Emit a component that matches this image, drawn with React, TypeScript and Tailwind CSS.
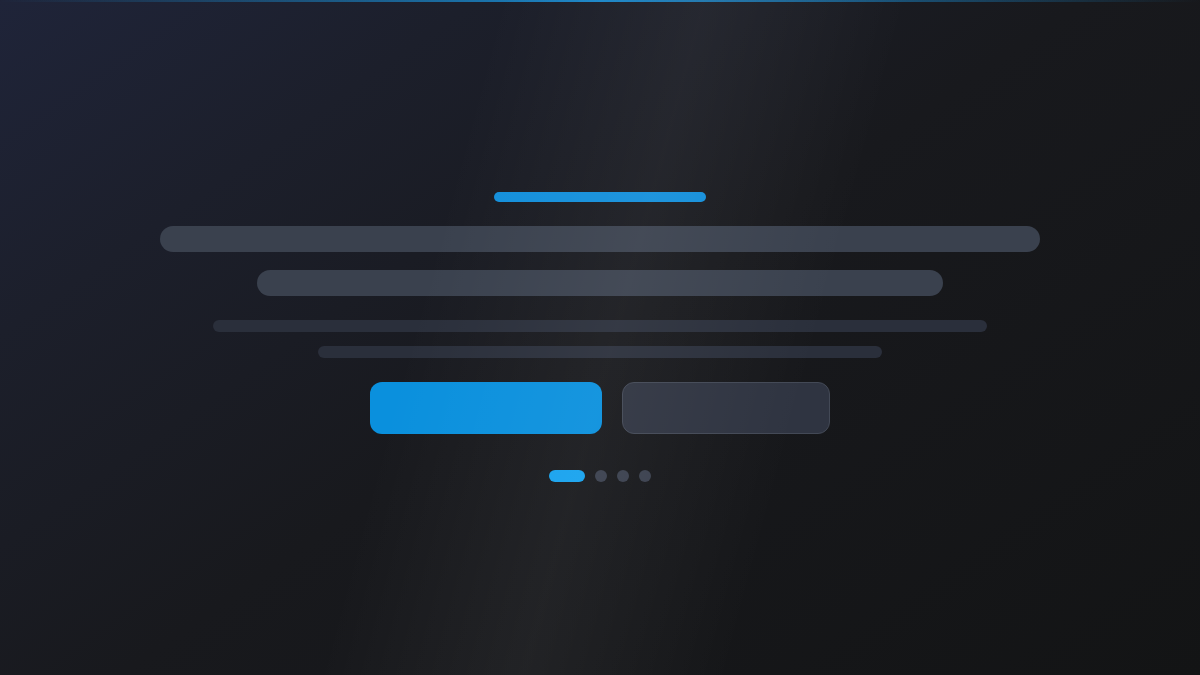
export default function App() {
  return (
    <div className="relative h-[675px] w-full overflow-hidden bg-[linear-gradient(145deg,#1f2439_0%,#1c1f2b_22%,#18191d_50%,#131415_100%)]">
      <div className="-mt-px flex h-full flex-col items-center justify-center">
        <div className="h-2.5 w-[212px] rounded-full bg-[#138fdb]" />
        <div className="mt-6 h-[26px] w-[880px] rounded-full bg-[#3a414e]" />
        <div className="mt-[18px] h-[26px] w-[686px] rounded-full bg-[#3a414e]" />
        <div className="mt-6 h-3 w-[774px] rounded-full bg-[#2a2f3b]" />
        <div className="mt-3.5 h-3 w-[564px] rounded-full bg-[#2a2f3b]" />

        <div className="mt-6 flex gap-5">
          <div className="h-[52px] w-[232px] rounded-xl bg-[#0a90dd]" />
          <div className="h-[52px] w-[208px] rounded-xl border border-[#434956] bg-[#2f3441]" />
        </div>

        <div className="mt-9 flex items-center gap-2.5">
          <div className="h-3 w-9 rounded-full bg-[#16a2ee]" />
          <div className="h-3 w-3 rounded-full bg-[#3a404e]" />
          <div className="h-3 w-3 rounded-full bg-[#3a404e]" />
          <div className="h-3 w-3 rounded-full bg-[#3a404e]" />
        </div>
      </div>

      {/* top accent line */}
      <div className="absolute inset-x-0 top-0 h-[2px] bg-gradient-to-r from-transparent via-[#1a86c8] to-transparent" />

      {/* diagonal sheen over everything */}
      <div className="pointer-events-none absolute inset-0 bg-[linear-gradient(105deg,transparent_36%,rgba(255,255,255,0.05)_51%,transparent_66%)]" />
    </div>
  );
}
